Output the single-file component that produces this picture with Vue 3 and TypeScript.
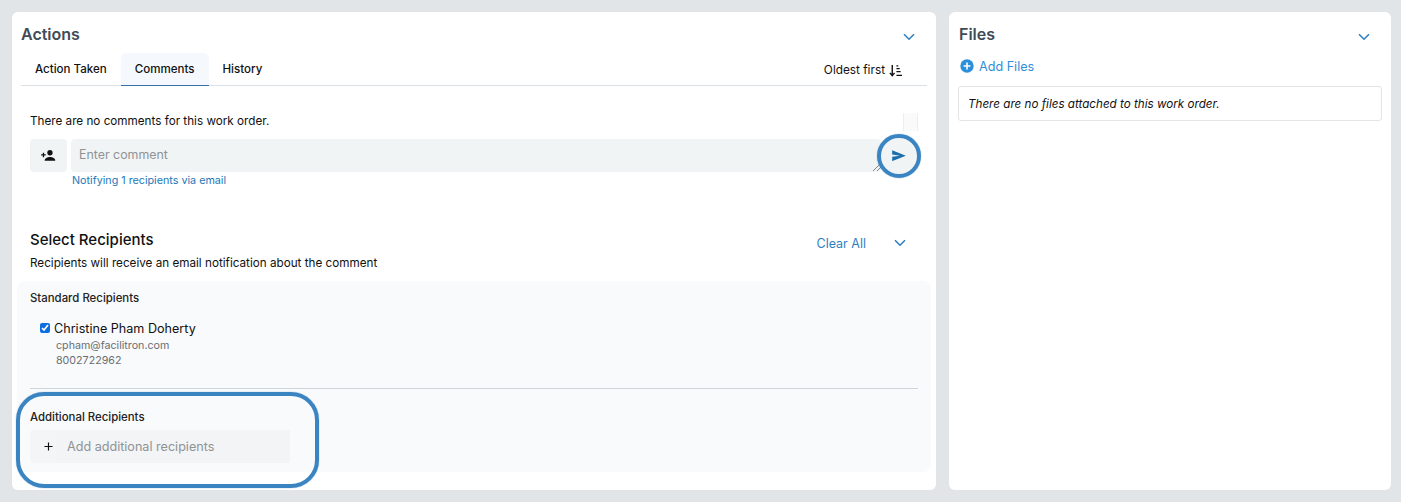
<script setup lang="ts">
const tabs: string[] = ['Action Taken', 'Comments', 'History']
</script>

<template>
  <div class="page">
    <section class="panel actions">
      <header class="panel-head">
        <h2>Actions</h2>
        <svg class="chev" viewBox="0 0 12 8" width="12" height="8"><path d="M1 1.2 6 6.2 11 1.2" /></svg>
      </header>
      <div class="tabs">
        <button v-for="t in tabs" :key="t" class="tab" :class="{ active: t === 'Comments' }">{{ t }}</button>
        <div class="sort">
          <span>Oldest first</span>
          <svg viewBox="0 0 14 14" width="13" height="13">
            <path d="M3.5 1v11.5M1 9.6l2.5 2.9L6 9.6" class="line" />
            <path d="M8 2h2M8 5h3.5M8 8.2h4.5M8 12.2h6" class="line" />
          </svg>
        </div>
      </div>

      <div class="comments">
        <div class="no-comments">
          <p>There are no comments for this work order.</p>
          <span class="mini-box"></span>
        </div>
        <div class="entry">
          <button class="person">
            <svg viewBox="0 0 16 12" width="15" height="11">
              <circle cx="9.6" cy="3" r="2.9" />
              <path d="M3.8 11.8c0-2.8 3.1-4.1 5.8-4.1s5.8 1.3 5.8 4.1z" />
              <path d="M0 5.4h5M2.5 2.9v5" class="plus" />
            </svg>
          </button>
          <div class="comment-input">
            <span>Enter comment</span>
            <svg class="grip" viewBox="0 0 10 10" width="10" height="10"><path d="M1 9 9 1M5 9l4-4" /></svg>
          </div>
          <div class="send-wrap">
            <svg viewBox="0 0 16 13" width="14" height="11.4"><path d="M.2.3 15.8 6.5.2 12.7V7.8L9 6.5.2 5.2z" /></svg>
            <span class="ring-round"></span>
          </div>
        </div>
        <div class="notify">Notifying 1 recipients via email</div>
      </div>

      <div class="recipients-head">
        <div>
          <h3>Select Recipients</h3>
          <p>Recipients will receive an email notification about the comment</p>
        </div>
        <div class="head-tools">
          <a>Clear All</a>
          <svg class="chev" viewBox="0 0 12 8" width="12" height="8"><path d="M1 1.2 6 6.2 11 1.2" /></svg>
        </div>
      </div>

      <div class="recipients">
        <h4>Standard Recipients</h4>
        <label class="person-row">
          <input type="checkbox" checked />
          <span class="name">Christine Pham Doherty</span>
        </label>
        <div class="details">
          <div>cpham@facilitron.com</div>
          <div>8002722962</div>
        </div>
        <hr />
        <div class="additional">
          <h4>Additional Recipients</h4>
          <div class="add-input">
            <span class="add-btn">
              <svg viewBox="0 0 10 10" width="9" height="9"><path d="M5 .5v9M.5 5h9" /></svg>
            </span>
            <span class="add-field">Add additional recipients</span>
          </div>
          <span class="ring-box"></span>
        </div>
      </div>
    </section>

    <section class="panel files">
      <header class="panel-head">
        <h2>Files</h2>
        <svg class="chev" viewBox="0 0 12 8" width="12" height="8"><path d="M1 1.2 6 6.2 11 1.2" /></svg>
      </header>
      <a class="add-files">
        <svg viewBox="0 0 14 14" width="14" height="14">
          <circle cx="7" cy="7" r="6.7" />
          <path d="M7 3.6v6.8M3.6 7h6.8" />
        </svg>
        <span>Add Files</span>
      </a>
      <div class="empty">There are no files attached to this work order.</div>
    </section>
  </div>
</template>

<style>
html, body { margin: 0; background: #e1e5e8; }
</style>

<style scoped>
* { box-sizing: border-box; }
.page {
  display: flex;
  gap: 13px;
  width: 1401px;
  height: 502px;
  padding: 12px 10px 12px 12px;
  background: #e1e5e8;
  font-family: Inter, "Liberation Sans", sans-serif;
  color: #111;
  overflow: hidden;
}
.panel { background: #fff; border-radius: 6px; height: 478px; }
.actions { width: 924px; padding: 0 9px; }
.files { width: 442px; padding: 0 9px; }
.files h2 { margin-left: 1px; }
.panel-head {
  display: flex;
  justify-content: space-between;
  align-items: center;
  height: 41px;
  padding-right: 12px;
  padding-top: 2px;
}
h2 { margin: 0; font-size: 16px; font-weight: 600; color: #3f4b55; }
.panel-head .chev { margin-top: 6px; }
.chev { fill: none; stroke: #2f7fc1; stroke-width: 1.6; }
.tabs {
  display: flex;
  align-items: stretch;
  height: 33px;
  border-bottom: 1px solid #dadfe4;
}
.tab {
  border: 0;
  background: none;
  padding: 0 14px;
  font: 500 11.55px Inter, sans-serif;
  color: #111;
  border-radius: 5px 5px 0 0;
  margin-bottom: -1px;
  border-bottom: 1px solid transparent;
}
.tab.active { background: #f5f9fd; border-bottom-color: #3570a8; }
.sort {
  margin-left: auto;
  margin-right: 25px;
  padding-top: 2px;
  display: flex;
  align-items: center;
  gap: 4px;
  font-size: 11.8px;
}
.line { fill: none; stroke: #111; stroke-width: 1.5; }
.comments { padding: 0 9px; }
.no-comments {
  display: flex;
  justify-content: space-between;
  height: 53px;
  padding-top: 27px;
  position: relative;
}
.no-comments p { margin: 1px 0 0; font-size: 11.7px; line-height: 15px; }
.mini-box {
  width: 15px;
  height: 18px;
  margin-top: -0.5px;
  background: #fafafa;
  border: 1px solid #eceef0;
  border-width: 0 1px;
}
.entry { display: flex; align-items: center; height: 33px; }
.person {
  width: 37px;
  height: 33px;
  padding: 0;
  border: 0;
  border-radius: 4px;
  background: #f1f4f5;
  display: grid;
  place-items: center;
}
.person svg { fill: #111; }
.plus { fill: none; stroke: #111; stroke-width: 1.4; }
.comment-input {
  position: relative;
  width: 810px;
  height: 33px;
  margin-left: 4px;
  padding: 0 8px 2px;
  display: flex;
  align-items: center;
  background: #f1f4f5;
  border-radius: 4px;
  color: #8e9396;
  font-size: 12.4px;
}
.grip {
  position: absolute;
  right: -1px;
  bottom: 0;
  fill: none;
  stroke: #666;
  stroke-width: .8;
}
.send-wrap {
  position: relative;
  width: 36px;
  height: 36px;
  background: #f1f4f5;
  border-radius: 50%;
  display: grid;
  place-items: center;
  flex: none;
}
.send-wrap svg { fill: #1a6fad; }
.ring-round {
  position: absolute;
  inset: -4px;
  border: 4.5px solid #3a84c1;
  border-radius: 50%;
  box-shadow: 0 0 1px #3a84c1;
}
.notify { margin: 1px 0 0 42px; font-size: 10.75px; line-height: 15px; color: #1c78b8; }
.recipients-head {
  display: flex;
  justify-content: space-between;
  padding: 43px 21px 0 9px;
}
h3 { margin: 0; font-size: 15px; font-weight: 500; line-height: 17px; color: #111; }
.recipients-head p { margin: 8px 0 0; font-size: 11.7px; line-height: 14px; }
.head-tools { display: flex; align-items: center; gap: 28px; height: 22px; margin-top: 1px; }
.head-tools a { font-size: 12.5px; color: #2f7fc1; }
.recipients {
  margin: 11px -4px 0;
  height: 191px;
  padding: 10px 13px 0;
  background: #f9fafc;
  border-radius: 8px;
}
h4 { margin: 0; font-size: 11.4px; font-weight: 500; line-height: 14px; color: #222; }
.person-row { display: flex; align-items: center; gap: 4px; margin: 15px 0 0 10px; height: 16px; }
.person-row input { width: 10px; height: 10px; margin: 0; accent-color: #0b6fe0; }
.name { font-size: 12.6px; }
.details { margin: 2px 0 0 26px; font-size: 10.7px; line-height: 15px; color: #696e72; }
hr { border: 0; border-top: 1px solid #cfd6db; margin: 20px 0 0; }
.additional { position: relative; padding-top: 21px; }
.add-input {
  margin-top: 6px;
  width: 260px;
  height: 33px;
  display: flex;
  font-size: 12.6px;
  color: #8e9396;
}
.add-btn {
  width: 26px;
  display: grid;
  place-items: center;
  padding-left: 10px;
  background: #f3f5f7;
  border-radius: 4px 0 0 4px;
}
.add-btn svg { fill: none; stroke: #111; stroke-width: 1.3; }
.add-field {
  flex: 1;
  display: flex;
  align-items: center;
  padding-left: 11px;
  background: #f2f4f5;
}
.ring-box {
  position: absolute;
  left: -14px;
  top: 3px;
  width: 303px;
  height: 96px;
  border: 4px solid #3a84c1;
  border-radius: 28px;
  box-shadow: 0 0 1px #3a84c1;
}
.add-files {
  display: flex;
  align-items: center;
  gap: 5px;
  margin: 6px 0 0 2px;
  height: 14px;
  font-size: 12.6px;
  color: #2f8fd6;
}
.add-files svg circle { fill: #2c8fd9; }
.add-files svg path { stroke: #fff; stroke-width: 1.6; fill: none; }
.empty {
  margin-top: 13px;
  height: 35px;
  border: 1px solid #e2e4e6;
  border-radius: 3px;
  padding: 0 9px;
  display: flex;
  align-items: center;
  font-size: 11.65px;
  font-style: italic;
  color: #111;
}
</style>
